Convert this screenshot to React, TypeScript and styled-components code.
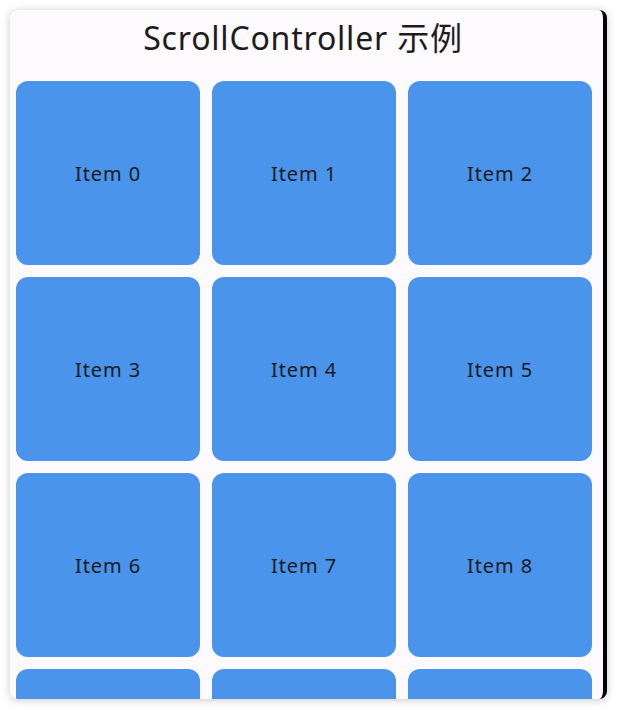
import React from "react";
import styled, { createGlobalStyle } from "styled-components";

const Global = createGlobalStyle`
  html, body { margin: 0; padding: 0; background: #ffffff; }
  body { font-family: "Noto Sans", Roboto, "Noto Sans CJK SC", sans-serif; }
`;

const Page = styled.div`
  padding: 10px 11px 11px 10px;
  height: 710px;
  box-sizing: border-box;
`;

const Card = styled.div`
  height: 689px;
  box-sizing: border-box;
  background: #fcfafd;
  border-right: 4px solid #000;
  border-radius: 8px;
  box-shadow: 0 1px 8px rgba(0, 0, 0, 0.22);
  overflow: hidden;
  display: flex;
  flex-direction: column;
`;

const Title = styled.h1`
  margin: 0;
  flex: 0 0 71px;
  display: flex;
  align-items: flex-start;
  justify-content: center;
  padding: 3px 7px 0 0;
  box-sizing: border-box;
  font-family: "Noto Sans", "Noto Sans CJK SC", sans-serif;
  font-weight: 400;
  font-size: 32px;
  line-height: normal;
  letter-spacing: 0.8px;
  color: #1d1b20;
`;

const Grid = styled.div`
  display: grid;
  flex-shrink: 0;
  grid-template-columns: repeat(3, 184px);
  grid-auto-rows: 184px;
  gap: 12px;
  padding-left: 6px;
`;

const Tile = styled.div`
  background: #4a94ec;
  border-radius: 12px;
  display: flex;
  align-items: center;
  justify-content: center;
  font-family: "Noto Sans", sans-serif;
  font-size: 20px;
  letter-spacing: 0.9px;
  color: #1d1b20;
`;

export default function App() {
  const items = Array.from({ length: 12 }, (_, i) => i);
  return (
    <>
      <Global />
      <Page>
        <Card>
          <Title>ScrollController 示例</Title>
          <Grid>
            {items.map((i) => (
              <Tile key={i}>Item {i}</Tile>
            ))}
          </Grid>
        </Card>
      </Page>
    </>
  );
}
